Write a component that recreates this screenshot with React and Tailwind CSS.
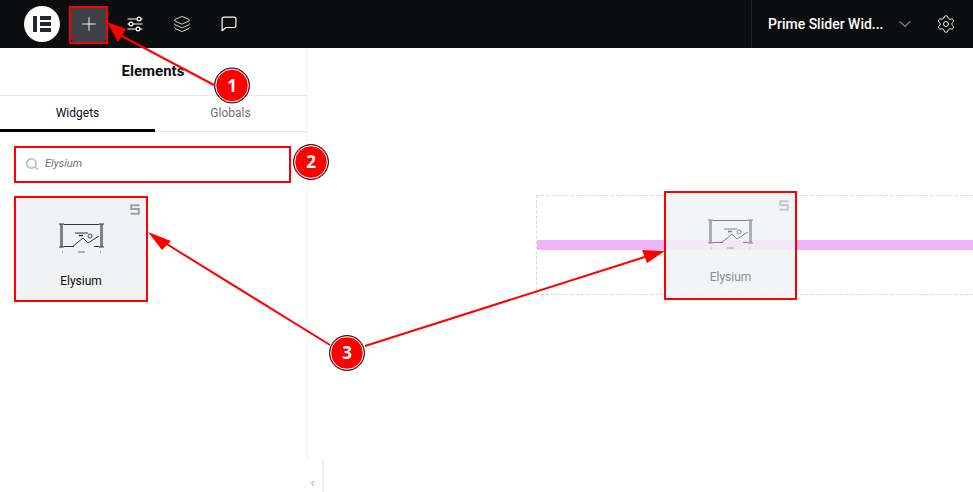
import React from "react";
import { Plus, Layers, ChevronDown, ChevronLeft, Settings, Search } from "lucide-react";

// sliders icon in the top bar
const SlidersIcon = () => (
  <svg width="16" height="16" viewBox="0 0 16 16" fill="none" stroke="currentColor" strokeWidth="1.2">
    <path d="M0.5 3h9.5M14 3h1.5M0.5 8h1.5M6 8h9.5M0.5 13h8.5M13 13h2.5" />
    <circle cx="12" cy="3" r="1.9" />
    <circle cx="4" cy="8" r="1.9" />
    <circle cx="11" cy="13" r="1.9" />
  </svg>
);

const ChatIcon = () => (
  <svg width="16" height="16" viewBox="0 0 16 16" fill="none" stroke="currentColor" strokeWidth="1.2" strokeLinejoin="round">
    <path d="M3 1.2h10a1.9 1.9 0 0 1 1.9 1.9v6.5a1.9 1.9 0 0 1-1.9 1.9H5l-3.9 3.2V3.1A1.9 1.9 0 0 1 3 1.2z" />
  </svg>
);

const ElementorLogo = () => (
  <div className="w-9 h-9 rounded-full bg-white flex items-center justify-center gap-[3px]">
    <div className="w-[4px] h-[16px] bg-[#26292c]" />
    <div className="flex flex-col gap-[2px]">
      <div className="w-[11px] h-[4px] bg-[#26292c]" />
      <div className="w-[11px] h-[4px] bg-[#26292c]" />
      <div className="w-[11px] h-[4px] bg-[#26292c]" />
    </div>
  </div>
);

const SliderIcon = ({ className }) => (
  <svg width="45" height="31" viewBox="0 0 45 31" fill="none" className={className}>
    <path d="M0 1h5M0 24h5M40 1h5M40 24h5" stroke="currentColor" strokeWidth="1" />
    <path d="M2.5 1v23M42.5 1v23" stroke="currentColor" strokeOpacity="0.6" strokeWidth="3" />
    <path d="M5 1.5h35M5 23.5h10M35 23.5h5" stroke="currentColor" strokeWidth="1" />
    <path d="M16 10h13" stroke="currentColor" strokeWidth="1" />
    <path d="M20 12.5h4" stroke="currentColor" strokeWidth="1.5" />
    <circle cx="31" cy="13" r="2" stroke="currentColor" strokeWidth="0.9" />
    <path d="M13 24l11-9 5 5 11-7" stroke="currentColor" strokeWidth="1" />
    <path d="M3 29h1M41 29h1M19 29h7" stroke="currentColor" strokeOpacity="0.7" strokeWidth="1" />
  </svg>
);

const ProBadge = ({ className }) => (
  <svg width="10" height="11" viewBox="0 0 10 11" fill="none" stroke="currentColor" strokeWidth="2" className={className}>
    <path d="M9.5 1.2H1.2v3.9h7.6v4.7H0.5" />
  </svg>
);

// red arrows and numbered circles drawn on top of the screenshot
const Annotations = () => (
  <svg width="973" height="492" viewBox="0 0 973 492" className="absolute inset-0 pointer-events-none">
    <g stroke="#ff0000" strokeWidth="2" fill="#ff0000">
      <path d="M214 85L118 34" />
      <path d="M330 345L165 243" />
      <path d="M365 346L648 256" />
    </g>
    <g fill="#ff0000">
      <polygon points="107,22 126,29 118,42" />
      <polygon points="148,232 171,241 162,250" />
      <polygon points="665,251 642,250 647,263" />
    </g>
    <g fill="none" stroke="#ff0000" strokeWidth="2">
      <rect x="70" y="7" width="37" height="36" />
      <rect x="15" y="147" width="275" height="35" />
      <rect x="15" y="197" width="132" height="104" />
      <rect x="665" y="192" width="131" height="107" />
    </g>
    {[
      [232, 85.5, "1"],
      [311, 162, "2"],
      [347, 353, "3"],
    ].map(([cx, cy, n]) => (
      <g key={n}>
        <circle cx={cx} cy={cy} r="17.5" fill="#ff0000" stroke="#222222" strokeWidth="1" />
        <circle cx={cx} cy={cy} r="16.3" fill="none" stroke="#ffffff" strokeWidth="1" />
        <text x={cx} y={cy + 6} textAnchor="middle" fill="#ffffff" fontSize="17" fontWeight="700" fontFamily="'Open Sans', sans-serif">
          {n}
        </text>
      </g>
    ))}
  </svg>
);

export default function App() {
  return (
    <div className="relative w-[973px] h-[492px] overflow-hidden bg-white flex flex-col font-['Roboto',sans-serif]">
      {/* Top bar */}
      <header className="h-12 shrink-0 bg-[#0c0d0e] flex items-center text-white">
        <div className="ml-6 mr-[11px]">
          <ElementorLogo />
        </div>
        <button className="w-[35px] h-[35px] rounded-[3px] bg-[#3f4144] flex items-center justify-center mr-[21px]">
          <Plus size={22} strokeWidth={1} />
        </button>
        <div className="flex items-center gap-[30px]">
          <SlidersIcon />
          <Layers size={18} strokeWidth={1.1} />
          <ChatIcon />
        </div>
        <div className="ml-auto w-[222px] h-full border-l border-[#232527] flex items-center">
          <span className="ml-[16px] text-[14px] font-medium leading-none w-[114px] whitespace-nowrap">Prime Slider Wid...</span>
          <ChevronDown size={20} strokeWidth={1} className="ml-[13px]" />
          <Settings size={20} strokeWidth={1.1} className="ml-[21px]" />
        </div>
      </header>

      <div className="flex flex-1 min-h-0">
        {/* Sidebar */}
        <aside className="w-[308px] shrink-0 h-[412px] border-r-2 border-dotted border-[#f0f0f1] flex flex-col">
          <div className="h-[47px] flex items-center justify-center text-[15px] font-bold text-[#0c0d0e]">
            <span className="mt-[-1px]">Elements</span>
          </div>
          <div className="flex h-[37px] border-y border-[#e6e8ea] text-[12px]">
            <div className="w-[155px] flex items-center justify-center text-[#0c0d0e] border-b-[3px] border-black -mb-px">Widgets</div>
            <div className="flex-1 flex items-center justify-center pb-[2px] text-[#6d7278]">Globals</div>
          </div>
          <div className="mt-[14px] ml-[14px] w-[277px] h-[37px] flex items-center px-[11px] border-b border-[#e6e8ea]">
            <Search size={14} strokeWidth={3} className="text-[#bcbfc3]" />
            <span className="ml-[6px] mt-[1px] text-[11px] italic text-[#6d7278]">Elysium</span>
          </div>
          <div className="relative mt-[13px] ml-[14px] w-[134px] h-[106px] bg-[#f1f2f4] flex flex-col items-center text-[#33373d]">
            <ProBadge className="absolute top-[8px] right-[8px] text-[#9da1a6]" />
            <SliderIcon className="mt-[27px]" />
            <span className="mt-[18px] text-[12px] text-[#0c0d0e]">Elysium</span>
          </div>
        </aside>

        {/* Canvas */}
        <main className="flex-1 pt-[147px] pl-[228px]">
          <div className="h-[100px] border border-dashed border-r-0 border-[#d5d8dc] pt-[44px]">
            <div className="h-[10px] bg-[#f1b3fb]" />
          </div>
        </main>
      </div>

      {/* Panel collapse handle */}
      <div className="absolute left-[308px] bottom-0 w-[16px] h-[32px] border-r-2 border-[#f0f0f1] flex items-center justify-center">
        <ChevronLeft size={13} strokeWidth={1.6} className="text-[#55595f] mt-[14px] mr-[5px]" />
      </div>

      {/* Widget being dragged over the canvas */}
      <div className="absolute left-[664px] top-[191px] w-[133px] h-[109px] bg-[#f1f2f4]/85 flex flex-col items-center text-[#7d8187]">
        <ProBadge className="absolute top-[9px] right-[8px] text-[#c4c6c9]" />
        <SliderIcon className="mt-[28px]" />
        <span className="mt-[18px] text-[12px] text-[#888c91]">Elysium</span>
      </div>

      <Annotations />
    </div>
  );
}
